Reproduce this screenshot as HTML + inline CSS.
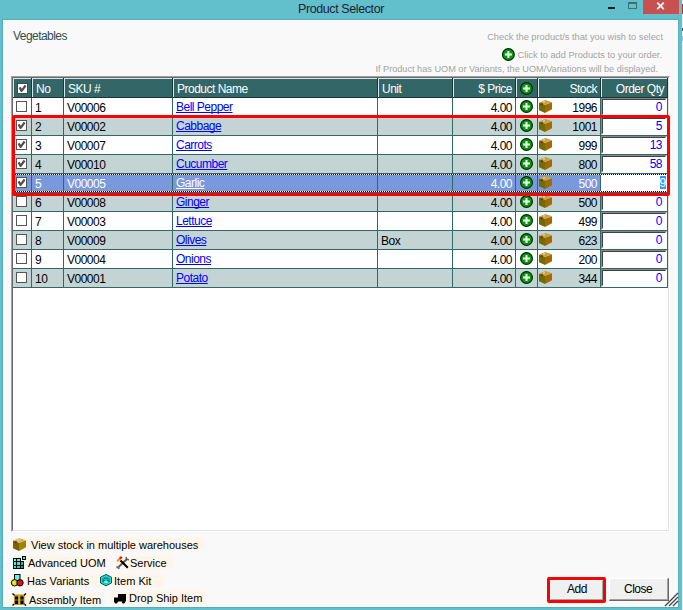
<!DOCTYPE html>
<html><head><meta charset="utf-8"><style>
html,body{margin:0;padding:0;}
body{width:683px;height:610px;position:relative;overflow:hidden;background:#f4f0f0;font-family:"Liberation Sans",sans-serif;}
div{position:absolute;box-sizing:border-box;}
.t{white-space:pre;line-height:20px;height:20px;}
svg{position:absolute;overflow:visible;}
</style></head><body>
<div style="left:682px;top:0px;width:1px;height:610px;background:#f2eeee;"></div>
<div style="left:682px;top:4px;width:1px;height:10px;background:#e02020;"></div>
<div style="left:682px;top:28px;width:1px;height:3px;background:#504848;"></div>
<div style="left:682px;top:36px;width:1px;height:5px;background:#98c8e8;"></div>
<div style="left:0px;top:0px;width:682px;height:610px;background:#62bfcc;"></div>
<div class="t" style="left:298px;top:-1px;font-size:12.5px;color:#1e1e30;letter-spacing:-0.4px;">Product Selector</div>
<div style="left:608px;top:7px;width:7px;height:2px;background:#1c1c1c;"></div>
<div style="left:628px;top:2px;width:9px;height:7px;background:transparent;border:1px solid #3e6e76;border-top-width:2px;"></div>
<div style="left:643px;top:0px;width:36px;height:14px;background:#c75050;"></div>
<svg style="left:0;top:0" width="683" height="20"><path d="M657.2 2.6 L663.8 9.2 M663.8 2.6 L657.2 9.2" stroke="#fff" stroke-width="1.7" fill="none"/></svg>
<div style="left:2px;top:19px;width:677px;height:589px;background:#53aebb;"></div>
<div style="left:3px;top:20px;width:675px;height:587px;background:#ffffff;"></div>
<div style="left:4px;top:21px;width:673px;height:585px;background:#f9f9f9;"></div>
<div class="t" style="left:13px;top:26px;font-size:12px;color:#2f4f4f;letter-spacing:-0.55px;">Vegetables</div>
<div class="t" style="left:263px;top:29px;width:400px;text-align:right;font-size:9.25px;color:#a3a3a3;letter-spacing:0px;line-height:16px;height:16px">Check the product/s that you wish to select</div>
<div class="t" style="left:262px;top:47px;width:400px;text-align:right;font-size:9.25px;color:#a3a3a3;letter-spacing:0px;line-height:16px;height:16px">Click to add Products to your order.</div>
<div class="t" style="left:258px;top:61px;width:400px;text-align:right;font-size:9.17px;color:#a3a3a3;letter-spacing:0px;line-height:16px;height:16px">If Product has UOM or Variants, the UOM/Variations will be displayed.</div>
<svg style="left:0;top:0" width="1" height="1"><circle cx="508.4" cy="54.5" r="5.9" fill="#009a0a" stroke="#002800" stroke-width="1.2"/><rect x="504.9" y="53.5" width="7" height="2" fill="#fff"/><rect x="507.4" y="51.0" width="2" height="7" fill="#fff"/></svg>
<div style="left:11px;top:76px;width:659px;height:456px;background:#ffffff;border-style:solid;border-width:2px;border-color:#a0a0a0 #ffffff #ffffff #a0a0a0;"></div>
<div style="left:12px;top:77px;width:657px;height:454px;background:transparent;border-style:solid;border-width:1px;border-color:#696969 #e3e3e3 #e3e3e3 #696969;"></div>
<div style="left:13px;top:78px;width:655px;height:20px;background:#336666;"></div>
<div style="left:13px;top:78px;width:19px;height:1px;background:#dbe6e6;"></div>
<div style="left:13px;top:78px;width:1px;height:19px;background:#dbe6e6;"></div>
<div style="left:31px;top:78px;width:1px;height:20px;background:#1c3636;"></div>
<div style="left:32px;top:78px;width:32px;height:1px;background:#dbe6e6;"></div>
<div style="left:32px;top:78px;width:1px;height:19px;background:#dbe6e6;"></div>
<div style="left:63px;top:78px;width:1px;height:20px;background:#1c3636;"></div>
<div style="left:64px;top:78px;width:109px;height:1px;background:#dbe6e6;"></div>
<div style="left:64px;top:78px;width:1px;height:19px;background:#dbe6e6;"></div>
<div style="left:172px;top:78px;width:1px;height:20px;background:#1c3636;"></div>
<div style="left:173px;top:78px;width:205px;height:1px;background:#dbe6e6;"></div>
<div style="left:173px;top:78px;width:1px;height:19px;background:#dbe6e6;"></div>
<div style="left:377px;top:78px;width:1px;height:20px;background:#1c3636;"></div>
<div style="left:378px;top:78px;width:75px;height:1px;background:#dbe6e6;"></div>
<div style="left:378px;top:78px;width:1px;height:19px;background:#dbe6e6;"></div>
<div style="left:452px;top:78px;width:1px;height:20px;background:#1c3636;"></div>
<div style="left:453px;top:78px;width:63px;height:1px;background:#dbe6e6;"></div>
<div style="left:453px;top:78px;width:1px;height:19px;background:#dbe6e6;"></div>
<div style="left:515px;top:78px;width:1px;height:20px;background:#1c3636;"></div>
<div style="left:516px;top:78px;width:22px;height:1px;background:#dbe6e6;"></div>
<div style="left:516px;top:78px;width:1px;height:19px;background:#dbe6e6;"></div>
<div style="left:537px;top:78px;width:1px;height:20px;background:#1c3636;"></div>
<div style="left:538px;top:78px;width:63px;height:1px;background:#dbe6e6;"></div>
<div style="left:538px;top:78px;width:1px;height:19px;background:#dbe6e6;"></div>
<div style="left:600px;top:78px;width:1px;height:20px;background:#1c3636;"></div>
<div style="left:601px;top:78px;width:67px;height:1px;background:#dbe6e6;"></div>
<div style="left:601px;top:78px;width:1px;height:19px;background:#dbe6e6;"></div>
<div style="left:667px;top:78px;width:1px;height:20px;background:#1c3636;"></div>
<div style="left:13px;top:97px;width:655px;height:1px;background:#1c3636;"></div>
<div style="left:17px;top:83px;width:11px;height:11px;background:#fff;border:1px solid #4e4444;"></div><svg style="left:0;top:0" width="1" height="1"><path d="M19.6 87.4 L21.6 90.9 L25.6 85.5" stroke="#4e4e4e" stroke-width="2.2" fill="none" stroke-linejoin="round"/></svg>
<div class="t" style="left:36px;top:79px;font-size:12px;color:#fff;letter-spacing:-0.5px;">No</div>
<div class="t" style="left:68px;top:79px;font-size:12px;color:#fff;letter-spacing:-0.5px;">SKU #</div>
<div class="t" style="left:177px;top:79px;font-size:12px;color:#fff;letter-spacing:-0.5px;">Product Name</div>
<div class="t" style="left:382px;top:79px;font-size:12px;color:#fff;letter-spacing:-0.5px;">Unit</div>
<div class="t" style="left:112px;top:79px;width:400px;text-align:right;font-size:12px;color:#fff;letter-spacing:-0.5px;">$ Price</div>
<svg style="left:0;top:0" width="1" height="1"><circle cx="526.5" cy="88.5" r="5.9" fill="#009a0a" stroke="#002800" stroke-width="1.2"/><rect x="523.0" y="87.5" width="7" height="2" fill="#fff"/><rect x="525.5" y="85.0" width="2" height="7" fill="#fff"/></svg>
<div class="t" style="left:197px;top:79px;width:400px;text-align:right;font-size:12px;color:#fff;letter-spacing:-0.5px;">Stock</div>
<div class="t" style="left:264px;top:79px;width:400px;text-align:right;font-size:12px;color:#fff;letter-spacing:-0.5px;">Order Qty</div>
<div style="left:13px;top:98px;width:655px;height:18px;background:#ffffff;"></div>
<div style="left:16px;top:101px;width:11px;height:11px;background:#fff;border:1px solid #555555;"></div>
<div class="t" style="left:35px;top:98px;font-size:12px;color:#000;letter-spacing:-0.5px;">1</div>
<div class="t" style="left:67px;top:98px;font-size:12px;color:#000;letter-spacing:-0.5px;">V00006</div>
<div class="t" style="left:176px;top:97px;font-size:12px;color:#0000ff;letter-spacing:-0.5px;text-decoration:underline;text-decoration-skip-ink:none;">Bell Pepper</div>
<div class="t" style="left:112px;top:98px;width:400px;text-align:right;font-size:12px;color:#000;letter-spacing:-0.5px;">4.00</div>
<svg style="left:0;top:0" width="1" height="1"><circle cx="526.5" cy="106.5" r="5.9" fill="#009a0a" stroke="#002800" stroke-width="1.2"/><rect x="523.0" y="105.5" width="7" height="2" fill="#fff"/><rect x="525.5" y="103.0" width="2" height="7" fill="#fff"/></svg>
<svg style="left:539px;top:100px" width="14" height="14" viewBox="0 0 14 14"><polygon points="0,2.5 6,4.8 6,13 0,10.2" fill="#716c00"/><polygon points="6,4.8 13,2.2 13,9.2 6,13" fill="#a26a00"/><polygon points="0,2.5 6.5,0 13,2.2 6,4.8" fill="#c8a048"/><rect x="4" y="1.2" width="2" height="1.5" fill="#e8c878"/><rect x="8" y="1.5" width="2" height="1.5" fill="#b8b040"/><rect x="1.8" y="3.2" width="2" height="2" fill="#7a2800"/></svg>
<div class="t" style="left:197px;top:98px;width:400px;text-align:right;font-size:12px;color:#000;letter-spacing:-0.5px;">1996</div>
<div style="left:601px;top:98px;width:66px;height:18px;background:#ffffff;border-style:solid;border-width:1px;border-color:#8c8888 #ffffff #ffffff #8c8888;"></div>
<div style="left:602px;top:99px;width:64px;height:16px;background:transparent;border-style:solid;border-width:1px;border-color:#404040 #ffffff #ffffff #404040;"></div>
<div class="t" style="left:262px;top:97px;width:400px;text-align:right;font-size:12px;color:#0000ff;letter-spacing:-0.5px;">0</div>
<div style="left:13px;top:117px;width:655px;height:18px;background:#c4d4d4;"></div>
<div style="left:16px;top:120px;width:11px;height:11px;background:#fff;border:1px solid #555555;"></div><svg style="left:0;top:0" width="1" height="1"><path d="M18.6 124.4 L20.6 127.9 L24.6 122.5" stroke="#4e4e4e" stroke-width="2.2" fill="none" stroke-linejoin="round"/></svg>
<div class="t" style="left:35px;top:117px;font-size:12px;color:#000;letter-spacing:-0.5px;">2</div>
<div class="t" style="left:67px;top:117px;font-size:12px;color:#000;letter-spacing:-0.5px;">V00002</div>
<div class="t" style="left:176px;top:116px;font-size:12px;color:#0000ff;letter-spacing:-0.5px;text-decoration:underline;text-decoration-skip-ink:none;">Cabbage</div>
<div class="t" style="left:112px;top:117px;width:400px;text-align:right;font-size:12px;color:#000;letter-spacing:-0.5px;">4.00</div>
<svg style="left:0;top:0" width="1" height="1"><circle cx="526.5" cy="125.5" r="5.9" fill="#009a0a" stroke="#002800" stroke-width="1.2"/><rect x="523.0" y="124.5" width="7" height="2" fill="#fff"/><rect x="525.5" y="122.0" width="2" height="7" fill="#fff"/></svg>
<svg style="left:539px;top:119px" width="14" height="14" viewBox="0 0 14 14"><polygon points="0,2.5 6,4.8 6,13 0,10.2" fill="#716c00"/><polygon points="6,4.8 13,2.2 13,9.2 6,13" fill="#a26a00"/><polygon points="0,2.5 6.5,0 13,2.2 6,4.8" fill="#c8a048"/><rect x="4" y="1.2" width="2" height="1.5" fill="#e8c878"/><rect x="8" y="1.5" width="2" height="1.5" fill="#b8b040"/><rect x="1.8" y="3.2" width="2" height="2" fill="#7a2800"/></svg>
<div class="t" style="left:197px;top:117px;width:400px;text-align:right;font-size:12px;color:#000;letter-spacing:-0.5px;">1001</div>
<div style="left:601px;top:117px;width:66px;height:18px;background:#ffffff;border-style:solid;border-width:1px;border-color:#8c8888 #ffffff #ffffff #8c8888;"></div>
<div style="left:602px;top:118px;width:64px;height:16px;background:transparent;border-style:solid;border-width:1px;border-color:#404040 #ffffff #ffffff #404040;"></div>
<div class="t" style="left:262px;top:116px;width:400px;text-align:right;font-size:12px;color:#0000ff;letter-spacing:-0.5px;">5</div>
<div style="left:13px;top:136px;width:655px;height:18px;background:#ffffff;"></div>
<div style="left:16px;top:139px;width:11px;height:11px;background:#fff;border:1px solid #555555;"></div><svg style="left:0;top:0" width="1" height="1"><path d="M18.6 143.4 L20.6 146.9 L24.6 141.5" stroke="#4e4e4e" stroke-width="2.2" fill="none" stroke-linejoin="round"/></svg>
<div class="t" style="left:35px;top:136px;font-size:12px;color:#000;letter-spacing:-0.5px;">3</div>
<div class="t" style="left:67px;top:136px;font-size:12px;color:#000;letter-spacing:-0.5px;">V00007</div>
<div class="t" style="left:176px;top:135px;font-size:12px;color:#0000ff;letter-spacing:-0.5px;text-decoration:underline;text-decoration-skip-ink:none;">Carrots</div>
<div class="t" style="left:112px;top:136px;width:400px;text-align:right;font-size:12px;color:#000;letter-spacing:-0.5px;">4.00</div>
<svg style="left:0;top:0" width="1" height="1"><circle cx="526.5" cy="144.5" r="5.9" fill="#009a0a" stroke="#002800" stroke-width="1.2"/><rect x="523.0" y="143.5" width="7" height="2" fill="#fff"/><rect x="525.5" y="141.0" width="2" height="7" fill="#fff"/></svg>
<svg style="left:539px;top:138px" width="14" height="14" viewBox="0 0 14 14"><polygon points="0,2.5 6,4.8 6,13 0,10.2" fill="#716c00"/><polygon points="6,4.8 13,2.2 13,9.2 6,13" fill="#a26a00"/><polygon points="0,2.5 6.5,0 13,2.2 6,4.8" fill="#c8a048"/><rect x="4" y="1.2" width="2" height="1.5" fill="#e8c878"/><rect x="8" y="1.5" width="2" height="1.5" fill="#b8b040"/><rect x="1.8" y="3.2" width="2" height="2" fill="#7a2800"/></svg>
<div class="t" style="left:197px;top:136px;width:400px;text-align:right;font-size:12px;color:#000;letter-spacing:-0.5px;">999</div>
<div style="left:601px;top:136px;width:66px;height:18px;background:#ffffff;border-style:solid;border-width:1px;border-color:#8c8888 #ffffff #ffffff #8c8888;"></div>
<div style="left:602px;top:137px;width:64px;height:16px;background:transparent;border-style:solid;border-width:1px;border-color:#404040 #ffffff #ffffff #404040;"></div>
<div class="t" style="left:262px;top:135px;width:400px;text-align:right;font-size:12px;color:#0000ff;letter-spacing:-0.5px;">13</div>
<div style="left:13px;top:155px;width:655px;height:18px;background:#c4d4d4;"></div>
<div style="left:16px;top:158px;width:11px;height:11px;background:#fff;border:1px solid #555555;"></div><svg style="left:0;top:0" width="1" height="1"><path d="M18.6 162.4 L20.6 165.9 L24.6 160.5" stroke="#4e4e4e" stroke-width="2.2" fill="none" stroke-linejoin="round"/></svg>
<div class="t" style="left:35px;top:155px;font-size:12px;color:#000;letter-spacing:-0.5px;">4</div>
<div class="t" style="left:67px;top:155px;font-size:12px;color:#000;letter-spacing:-0.5px;">V00010</div>
<div class="t" style="left:176px;top:154px;font-size:12px;color:#0000ff;letter-spacing:-0.5px;text-decoration:underline;text-decoration-skip-ink:none;">Cucumber</div>
<div class="t" style="left:112px;top:155px;width:400px;text-align:right;font-size:12px;color:#000;letter-spacing:-0.5px;">4.00</div>
<svg style="left:0;top:0" width="1" height="1"><circle cx="526.5" cy="163.5" r="5.9" fill="#009a0a" stroke="#002800" stroke-width="1.2"/><rect x="523.0" y="162.5" width="7" height="2" fill="#fff"/><rect x="525.5" y="160.0" width="2" height="7" fill="#fff"/></svg>
<svg style="left:539px;top:157px" width="14" height="14" viewBox="0 0 14 14"><polygon points="0,2.5 6,4.8 6,13 0,10.2" fill="#716c00"/><polygon points="6,4.8 13,2.2 13,9.2 6,13" fill="#a26a00"/><polygon points="0,2.5 6.5,0 13,2.2 6,4.8" fill="#c8a048"/><rect x="4" y="1.2" width="2" height="1.5" fill="#e8c878"/><rect x="8" y="1.5" width="2" height="1.5" fill="#b8b040"/><rect x="1.8" y="3.2" width="2" height="2" fill="#7a2800"/></svg>
<div class="t" style="left:197px;top:155px;width:400px;text-align:right;font-size:12px;color:#000;letter-spacing:-0.5px;">800</div>
<div style="left:601px;top:155px;width:66px;height:18px;background:#ffffff;border-style:solid;border-width:1px;border-color:#8c8888 #ffffff #ffffff #8c8888;"></div>
<div style="left:602px;top:156px;width:64px;height:16px;background:transparent;border-style:solid;border-width:1px;border-color:#404040 #ffffff #ffffff #404040;"></div>
<div class="t" style="left:262px;top:154px;width:400px;text-align:right;font-size:12px;color:#0000ff;letter-spacing:-0.5px;">58</div>
<div style="left:13px;top:174px;width:655px;height:18px;background:#7a98dc;"></div>
<div style="left:16px;top:177px;width:11px;height:11px;background:#fff;border:1px solid #555555;"></div><svg style="left:0;top:0" width="1" height="1"><path d="M18.6 181.4 L20.6 184.9 L24.6 179.5" stroke="#4e4e4e" stroke-width="2.2" fill="none" stroke-linejoin="round"/></svg>
<div class="t" style="left:35px;top:174px;font-size:12px;color:#fff;letter-spacing:-0.5px;">5</div>
<div class="t" style="left:67px;top:174px;font-size:12px;color:#fff;letter-spacing:-0.5px;">V00005</div>
<div class="t" style="left:176px;top:173px;font-size:12px;color:#fff;letter-spacing:-0.5px;text-decoration:underline;text-decoration-skip-ink:none;">Garlic</div>
<div class="t" style="left:112px;top:174px;width:400px;text-align:right;font-size:12px;color:#fff;letter-spacing:-0.5px;">4.00</div>
<svg style="left:0;top:0" width="1" height="1"><circle cx="526.5" cy="182.5" r="5.9" fill="#009a0a" stroke="#002800" stroke-width="1.2"/><rect x="523.0" y="181.5" width="7" height="2" fill="#fff"/><rect x="525.5" y="179.0" width="2" height="7" fill="#fff"/></svg>
<svg style="left:539px;top:176px" width="14" height="14" viewBox="0 0 14 14"><polygon points="0,2.5 6,4.8 6,13 0,10.2" fill="#716c00"/><polygon points="6,4.8 13,2.2 13,9.2 6,13" fill="#a26a00"/><polygon points="0,2.5 6.5,0 13,2.2 6,4.8" fill="#c8a048"/><rect x="4" y="1.2" width="2" height="1.5" fill="#e8c878"/><rect x="8" y="1.5" width="2" height="1.5" fill="#b8b040"/><rect x="1.8" y="3.2" width="2" height="2" fill="#7a2800"/></svg>
<div class="t" style="left:197px;top:174px;width:400px;text-align:right;font-size:12px;color:#fff;letter-spacing:-0.5px;">500</div>
<div style="left:601px;top:174px;width:66px;height:18px;background:#ffffff;"></div>
<div style="left:660px;top:176px;width:6px;height:13px;background:#3399ff;"></div>
<div class="t" style="left:659.5px;top:173px;font-size:12px;color:#fff;letter-spacing:0px;">9</div>
<div style="left:13px;top:193px;width:655px;height:18px;background:#c4d4d4;"></div>
<div style="left:16px;top:196px;width:11px;height:11px;background:#fff;border:1px solid #555555;"></div>
<div class="t" style="left:35px;top:193px;font-size:12px;color:#000;letter-spacing:-0.5px;">6</div>
<div class="t" style="left:67px;top:193px;font-size:12px;color:#000;letter-spacing:-0.5px;">V00008</div>
<div class="t" style="left:176px;top:192px;font-size:12px;color:#0000ff;letter-spacing:-0.5px;text-decoration:underline;text-decoration-skip-ink:none;">Ginger</div>
<div class="t" style="left:112px;top:193px;width:400px;text-align:right;font-size:12px;color:#000;letter-spacing:-0.5px;">4.00</div>
<svg style="left:0;top:0" width="1" height="1"><circle cx="526.5" cy="201.5" r="5.9" fill="#009a0a" stroke="#002800" stroke-width="1.2"/><rect x="523.0" y="200.5" width="7" height="2" fill="#fff"/><rect x="525.5" y="198.0" width="2" height="7" fill="#fff"/></svg>
<svg style="left:539px;top:195px" width="14" height="14" viewBox="0 0 14 14"><polygon points="0,2.5 6,4.8 6,13 0,10.2" fill="#716c00"/><polygon points="6,4.8 13,2.2 13,9.2 6,13" fill="#a26a00"/><polygon points="0,2.5 6.5,0 13,2.2 6,4.8" fill="#c8a048"/><rect x="4" y="1.2" width="2" height="1.5" fill="#e8c878"/><rect x="8" y="1.5" width="2" height="1.5" fill="#b8b040"/><rect x="1.8" y="3.2" width="2" height="2" fill="#7a2800"/></svg>
<div class="t" style="left:197px;top:193px;width:400px;text-align:right;font-size:12px;color:#000;letter-spacing:-0.5px;">500</div>
<div style="left:601px;top:193px;width:66px;height:18px;background:#ffffff;border-style:solid;border-width:1px;border-color:#8c8888 #ffffff #ffffff #8c8888;"></div>
<div style="left:602px;top:194px;width:64px;height:16px;background:transparent;border-style:solid;border-width:1px;border-color:#404040 #ffffff #ffffff #404040;"></div>
<div class="t" style="left:262px;top:192px;width:400px;text-align:right;font-size:12px;color:#0000ff;letter-spacing:-0.5px;">0</div>
<div style="left:13px;top:212px;width:655px;height:18px;background:#ffffff;"></div>
<div style="left:16px;top:215px;width:11px;height:11px;background:#fff;border:1px solid #555555;"></div>
<div class="t" style="left:35px;top:212px;font-size:12px;color:#000;letter-spacing:-0.5px;">7</div>
<div class="t" style="left:67px;top:212px;font-size:12px;color:#000;letter-spacing:-0.5px;">V00003</div>
<div class="t" style="left:176px;top:211px;font-size:12px;color:#0000ff;letter-spacing:-0.5px;text-decoration:underline;text-decoration-skip-ink:none;">Lettuce</div>
<div class="t" style="left:112px;top:212px;width:400px;text-align:right;font-size:12px;color:#000;letter-spacing:-0.5px;">4.00</div>
<svg style="left:0;top:0" width="1" height="1"><circle cx="526.5" cy="220.5" r="5.9" fill="#009a0a" stroke="#002800" stroke-width="1.2"/><rect x="523.0" y="219.5" width="7" height="2" fill="#fff"/><rect x="525.5" y="217.0" width="2" height="7" fill="#fff"/></svg>
<svg style="left:539px;top:214px" width="14" height="14" viewBox="0 0 14 14"><polygon points="0,2.5 6,4.8 6,13 0,10.2" fill="#716c00"/><polygon points="6,4.8 13,2.2 13,9.2 6,13" fill="#a26a00"/><polygon points="0,2.5 6.5,0 13,2.2 6,4.8" fill="#c8a048"/><rect x="4" y="1.2" width="2" height="1.5" fill="#e8c878"/><rect x="8" y="1.5" width="2" height="1.5" fill="#b8b040"/><rect x="1.8" y="3.2" width="2" height="2" fill="#7a2800"/></svg>
<div class="t" style="left:197px;top:212px;width:400px;text-align:right;font-size:12px;color:#000;letter-spacing:-0.5px;">499</div>
<div style="left:601px;top:212px;width:66px;height:18px;background:#ffffff;border-style:solid;border-width:1px;border-color:#8c8888 #ffffff #ffffff #8c8888;"></div>
<div style="left:602px;top:213px;width:64px;height:16px;background:transparent;border-style:solid;border-width:1px;border-color:#404040 #ffffff #ffffff #404040;"></div>
<div class="t" style="left:262px;top:211px;width:400px;text-align:right;font-size:12px;color:#0000ff;letter-spacing:-0.5px;">0</div>
<div style="left:13px;top:231px;width:655px;height:18px;background:#c4d4d4;"></div>
<div style="left:16px;top:234px;width:11px;height:11px;background:#fff;border:1px solid #555555;"></div>
<div class="t" style="left:35px;top:231px;font-size:12px;color:#000;letter-spacing:-0.5px;">8</div>
<div class="t" style="left:67px;top:231px;font-size:12px;color:#000;letter-spacing:-0.5px;">V00009</div>
<div class="t" style="left:176px;top:230px;font-size:12px;color:#0000ff;letter-spacing:-0.5px;text-decoration:underline;text-decoration-skip-ink:none;">Olives</div>
<div class="t" style="left:381px;top:231px;font-size:12px;color:#000;letter-spacing:-0.5px;">Box</div>
<div class="t" style="left:112px;top:231px;width:400px;text-align:right;font-size:12px;color:#000;letter-spacing:-0.5px;">4.00</div>
<svg style="left:0;top:0" width="1" height="1"><circle cx="526.5" cy="239.5" r="5.9" fill="#009a0a" stroke="#002800" stroke-width="1.2"/><rect x="523.0" y="238.5" width="7" height="2" fill="#fff"/><rect x="525.5" y="236.0" width="2" height="7" fill="#fff"/></svg>
<svg style="left:539px;top:233px" width="14" height="14" viewBox="0 0 14 14"><polygon points="0,2.5 6,4.8 6,13 0,10.2" fill="#716c00"/><polygon points="6,4.8 13,2.2 13,9.2 6,13" fill="#a26a00"/><polygon points="0,2.5 6.5,0 13,2.2 6,4.8" fill="#c8a048"/><rect x="4" y="1.2" width="2" height="1.5" fill="#e8c878"/><rect x="8" y="1.5" width="2" height="1.5" fill="#b8b040"/><rect x="1.8" y="3.2" width="2" height="2" fill="#7a2800"/></svg>
<div class="t" style="left:197px;top:231px;width:400px;text-align:right;font-size:12px;color:#000;letter-spacing:-0.5px;">623</div>
<div style="left:601px;top:231px;width:66px;height:18px;background:#ffffff;border-style:solid;border-width:1px;border-color:#8c8888 #ffffff #ffffff #8c8888;"></div>
<div style="left:602px;top:232px;width:64px;height:16px;background:transparent;border-style:solid;border-width:1px;border-color:#404040 #ffffff #ffffff #404040;"></div>
<div class="t" style="left:262px;top:230px;width:400px;text-align:right;font-size:12px;color:#0000ff;letter-spacing:-0.5px;">0</div>
<div style="left:13px;top:250px;width:655px;height:18px;background:#ffffff;"></div>
<div style="left:16px;top:253px;width:11px;height:11px;background:#fff;border:1px solid #555555;"></div>
<div class="t" style="left:35px;top:250px;font-size:12px;color:#000;letter-spacing:-0.5px;">9</div>
<div class="t" style="left:67px;top:250px;font-size:12px;color:#000;letter-spacing:-0.5px;">V00004</div>
<div class="t" style="left:176px;top:249px;font-size:12px;color:#0000ff;letter-spacing:-0.5px;text-decoration:underline;text-decoration-skip-ink:none;">Onions</div>
<div class="t" style="left:112px;top:250px;width:400px;text-align:right;font-size:12px;color:#000;letter-spacing:-0.5px;">4.00</div>
<svg style="left:0;top:0" width="1" height="1"><circle cx="526.5" cy="258.5" r="5.9" fill="#009a0a" stroke="#002800" stroke-width="1.2"/><rect x="523.0" y="257.5" width="7" height="2" fill="#fff"/><rect x="525.5" y="255.0" width="2" height="7" fill="#fff"/></svg>
<svg style="left:539px;top:252px" width="14" height="14" viewBox="0 0 14 14"><polygon points="0,2.5 6,4.8 6,13 0,10.2" fill="#716c00"/><polygon points="6,4.8 13,2.2 13,9.2 6,13" fill="#a26a00"/><polygon points="0,2.5 6.5,0 13,2.2 6,4.8" fill="#c8a048"/><rect x="4" y="1.2" width="2" height="1.5" fill="#e8c878"/><rect x="8" y="1.5" width="2" height="1.5" fill="#b8b040"/><rect x="1.8" y="3.2" width="2" height="2" fill="#7a2800"/></svg>
<div class="t" style="left:197px;top:250px;width:400px;text-align:right;font-size:12px;color:#000;letter-spacing:-0.5px;">200</div>
<div style="left:601px;top:250px;width:66px;height:18px;background:#ffffff;border-style:solid;border-width:1px;border-color:#8c8888 #ffffff #ffffff #8c8888;"></div>
<div style="left:602px;top:251px;width:64px;height:16px;background:transparent;border-style:solid;border-width:1px;border-color:#404040 #ffffff #ffffff #404040;"></div>
<div class="t" style="left:262px;top:249px;width:400px;text-align:right;font-size:12px;color:#0000ff;letter-spacing:-0.5px;">0</div>
<div style="left:13px;top:269px;width:655px;height:18px;background:#c4d4d4;"></div>
<div style="left:16px;top:272px;width:11px;height:11px;background:#fff;border:1px solid #555555;"></div>
<div class="t" style="left:35px;top:269px;font-size:12px;color:#000;letter-spacing:-0.5px;">10</div>
<div class="t" style="left:67px;top:269px;font-size:12px;color:#000;letter-spacing:-0.5px;">V00001</div>
<div class="t" style="left:176px;top:268px;font-size:12px;color:#0000ff;letter-spacing:-0.5px;text-decoration:underline;text-decoration-skip-ink:none;">Potato</div>
<div class="t" style="left:112px;top:269px;width:400px;text-align:right;font-size:12px;color:#000;letter-spacing:-0.5px;">4.00</div>
<svg style="left:0;top:0" width="1" height="1"><circle cx="526.5" cy="277.5" r="5.9" fill="#009a0a" stroke="#002800" stroke-width="1.2"/><rect x="523.0" y="276.5" width="7" height="2" fill="#fff"/><rect x="525.5" y="274.0" width="2" height="7" fill="#fff"/></svg>
<svg style="left:539px;top:271px" width="14" height="14" viewBox="0 0 14 14"><polygon points="0,2.5 6,4.8 6,13 0,10.2" fill="#716c00"/><polygon points="6,4.8 13,2.2 13,9.2 6,13" fill="#a26a00"/><polygon points="0,2.5 6.5,0 13,2.2 6,4.8" fill="#c8a048"/><rect x="4" y="1.2" width="2" height="1.5" fill="#e8c878"/><rect x="8" y="1.5" width="2" height="1.5" fill="#b8b040"/><rect x="1.8" y="3.2" width="2" height="2" fill="#7a2800"/></svg>
<div class="t" style="left:197px;top:269px;width:400px;text-align:right;font-size:12px;color:#000;letter-spacing:-0.5px;">344</div>
<div style="left:601px;top:269px;width:66px;height:18px;background:#ffffff;border-style:solid;border-width:1px;border-color:#8c8888 #ffffff #ffffff #8c8888;"></div>
<div style="left:602px;top:270px;width:64px;height:16px;background:transparent;border-style:solid;border-width:1px;border-color:#404040 #ffffff #ffffff #404040;"></div>
<div class="t" style="left:262px;top:268px;width:400px;text-align:right;font-size:12px;color:#0000ff;letter-spacing:-0.5px;">0</div>
<div style="left:31px;top:98px;width:1px;height:190px;background:#336666;"></div>
<div style="left:63px;top:98px;width:1px;height:190px;background:#336666;"></div>
<div style="left:172px;top:98px;width:1px;height:190px;background:#336666;"></div>
<div style="left:377px;top:98px;width:1px;height:190px;background:#336666;"></div>
<div style="left:452px;top:98px;width:1px;height:190px;background:#336666;"></div>
<div style="left:515px;top:98px;width:1px;height:190px;background:#336666;"></div>
<div style="left:537px;top:98px;width:1px;height:190px;background:#336666;"></div>
<div style="left:600px;top:98px;width:1px;height:190px;background:#336666;"></div>
<div style="left:667px;top:98px;width:1px;height:190px;background:#336666;"></div>
<div style="left:13px;top:116px;width:655px;height:1px;background:#336666;"></div>
<div style="left:13px;top:135px;width:655px;height:1px;background:#336666;"></div>
<div style="left:13px;top:154px;width:655px;height:1px;background:#336666;"></div>
<div style="left:13px;top:173px;width:655px;height:1px;background:#336666;"></div>
<div style="left:13px;top:192px;width:655px;height:1px;background:#336666;"></div>
<div style="left:13px;top:211px;width:655px;height:1px;background:#336666;"></div>
<div style="left:13px;top:230px;width:655px;height:1px;background:#336666;"></div>
<div style="left:13px;top:249px;width:655px;height:1px;background:#336666;"></div>
<div style="left:13px;top:268px;width:655px;height:1px;background:#336666;"></div>
<div style="left:13px;top:287px;width:655px;height:1px;background:#336666;"></div>
<div style="left:13px;top:174px;width:655px;height:1px;background:repeating-linear-gradient(90deg,#000 0 1px,#fff 1px 2px);"></div>
<div style="left:13px;top:191px;width:655px;height:1px;background:repeating-linear-gradient(90deg,#000 0 1px,#fff 1px 2px);"></div>
<div style="left:12px;top:115px;width:658px;height:81px;background:transparent;border:3px solid #ff0000;border-radius:2px;"></div>
<div style="left:12px;top:538px;width:192px;height:12px;background:#fff6e9;"></div>
<div style="left:13px;top:556px;width:92px;height:13px;background:#fff6e9;"></div>
<div style="left:116px;top:556px;width:58px;height:13px;background:#fff6e9;"></div>
<div style="left:11px;top:574px;width:88px;height:13px;background:#fff6e9;"></div>
<div style="left:99px;top:574px;width:65px;height:13px;background:#fff6e9;"></div>
<div style="left:12px;top:593px;width:92px;height:13px;background:#fff6e9;"></div>
<div style="left:111px;top:591px;width:95px;height:14px;background:#fff6e9;"></div>
<svg style="left:13px;top:538px" width="14" height="14" viewBox="0 0 14 14"><polygon points="0,2.5 6,4.8 6,13 0,10.2" fill="#7a6200"/><polygon points="6,4.8 13,2.2 13,9.2 6,13" fill="#a38200"/><polygon points="0,2.5 6.5,0 13,2.2 6,4.8" fill="#d8bc78"/><rect x="4" y="1.2" width="2" height="1.5" fill="#e8c878"/><rect x="8" y="1.5" width="2" height="1.5" fill="#b8b040"/><rect x="1.8" y="3.2" width="2" height="2" fill="#7a2800"/></svg>
<div class="t" style="left:31px;top:535px;font-size:11px;color:#000;letter-spacing:0px;">View stock in multiple warehouses</div>
<svg style="left:13px;top:556px" width="14" height="13" viewBox="0 0 14 13"><rect x="0" y="2" width="8" height="11" fill="#000"/><rect x="7" y="5" width="4" height="8" fill="#000"/><rect x="9" y="0" width="4" height="4" fill="#000"/><rect x="10" y="1" width="2" height="2" fill="#20f0f0"/><rect x="1" y="3" width="2" height="2" fill="#60f4f4"/><rect x="4" y="3" width="3" height="2" fill="#40ecec"/><rect x="1" y="6" width="2" height="3" fill="#30f0f0"/><rect x="4" y="6" width="3" height="3" fill="#20e8e8"/><rect x="8" y="6" width="2" height="3" fill="#10b8b8"/><rect x="1" y="10" width="2" height="2" fill="#10f0f0"/><rect x="4" y="10" width="3" height="2" fill="#10d0d0"/><rect x="8" y="10" width="2" height="2" fill="#109898"/></svg>
<div class="t" style="left:28px;top:553px;font-size:11px;color:#000;letter-spacing:0px;">Advanced UOM</div>
<svg style="left:116px;top:556px" width="14" height="13" viewBox="0 0 14 13"><path d="M2.5 11 L11 3" stroke="#5a5a5a" stroke-width="1.8"/><path d="M0.8 10.2 L1.5 12 M3.5 12.5 L1.8 11.8 M9.8 1.2 L10.8 2.8 M12.8 4 L11.2 3.2" stroke="#5a5a5a" stroke-width="1.5"/><path d="M4.5 4.5 L11.8 11.8" stroke="#000" stroke-width="2"/><path d="M1.3 5.2 L4.2 2.3" stroke="#ff8a00" stroke-width="2"/><path d="M3.8 2.6 L5.8 0.8" stroke="#e01818" stroke-width="2.3"/></svg>
<div class="t" style="left:130px;top:553px;font-size:11px;color:#000;letter-spacing:0px;">Service</div>
<svg style="left:11px;top:574px" width="13" height="13" viewBox="0 0 13 13"><rect x="3.5" y="0.5" width="5.5" height="6" fill="#60f0f0" stroke="#000" stroke-width="1"/><circle cx="3.5" cy="8.8" r="3.2" fill="#e8e020" stroke="#000" stroke-width="1"/><circle cx="9" cy="8.8" r="3.2" fill="#d01818" stroke="#000" stroke-width="1"/></svg>
<div class="t" style="left:27px;top:571px;font-size:11px;color:#000;letter-spacing:0px;">Has Variants</div>
<svg style="left:100px;top:574px" width="13" height="13" viewBox="0 0 13 13"><polygon points="6,0.5 11.5,3.2 11.5,9 6,11.8 0.5,9 0.5,3.2" fill="#22d8d8" stroke="#005a5a" stroke-width="1"/><polygon points="6,2.8 9.5,4.5 9.5,8 6,9.8 2.5,8 2.5,4.5" fill="#0a6a6a"/><polygon points="6,6.5 9,8 6,9.6 3,8" fill="#80f4f4"/><path d="M6 3 L6 6.5 M2.8 4.8 L6 6.5 L9.2 4.8" stroke="#30e0e0" stroke-width="0.9" fill="none"/></svg>
<div class="t" style="left:114px;top:571px;font-size:11px;color:#000;letter-spacing:0px;">Item Kit</div>
<svg style="left:12px;top:593px" width="15" height="13" viewBox="0 0 15 13"><path d="M0.5 0.5 L14 12.5 M14 0.5 L0.5 12.5" stroke="#000" stroke-width="1.4"/><path d="M2 12 L2 3.5 Q2 1.5 4.5 1.5 L10 1.5 Q12.5 1.5 12.5 3.5 L12.5 12 Z" fill="#b89018"/><rect x="3" y="3.5" width="3" height="3" fill="#000"/><rect x="8.5" y="3.5" width="3" height="3" fill="#000"/><rect x="3" y="7.5" width="3" height="3.5" fill="#000"/><rect x="8.5" y="7.5" width="3" height="3.5" fill="#000"/><rect x="6.5" y="2" width="1.5" height="10" fill="#d8b040"/></svg>
<div class="t" style="left:29px;top:590px;font-size:11px;color:#000;letter-spacing:0px;">Assembly Item</div>
<svg style="left:113px;top:593px" width="14" height="11" viewBox="0 0 14 11"><rect x="5" y="1" width="8" height="7.5" fill="#000"/><rect x="1" y="4.5" width="4" height="4.5" fill="#000"/><circle cx="3" cy="9" r="1.6" fill="#000"/><circle cx="10.5" cy="9" r="1.6" fill="#000"/></svg>
<div class="t" style="left:129px;top:588px;font-size:11px;color:#000;letter-spacing:0px;">Drop Ship Item</div>
<div style="left:547px;top:577px;width:59px;height:26px;background:#f0f0f0;border:3px solid #ff0000;border-radius:2px;"></div>
<div style="left:550px;top:580px;width:53px;height:20px;background:transparent;border-style:solid;border-width:1px;border-color:#fff #8ab0b0 #8ab0b0 #fff;"></div>
<div class="t" style="left:567px;top:579px;font-size:12px;color:#000;letter-spacing:-0.5px;">Add</div>
<div style="left:609px;top:578px;width:60px;height:23px;background:#f0f0f0;border-style:solid;border-width:1px 2px 2px 1px;border-color:#fff #696969 #696969 #fff;"></div>
<div style="left:610px;top:579px;width:58px;height:21px;background:transparent;border-style:solid;border-width:0 1px 1px 0;border-color:#a0a0a0;"></div>
<div class="t" style="left:624px;top:579px;font-size:12px;color:#000;letter-spacing:-0.5px;">Close</div>
<svg style="left:0;top:0" width="1" height="1"><path d="M665 606 L678 593 M669 606 L678 597 M673 606 L678 601" stroke="#444" stroke-width="1.3"/></svg>
</body></html>
